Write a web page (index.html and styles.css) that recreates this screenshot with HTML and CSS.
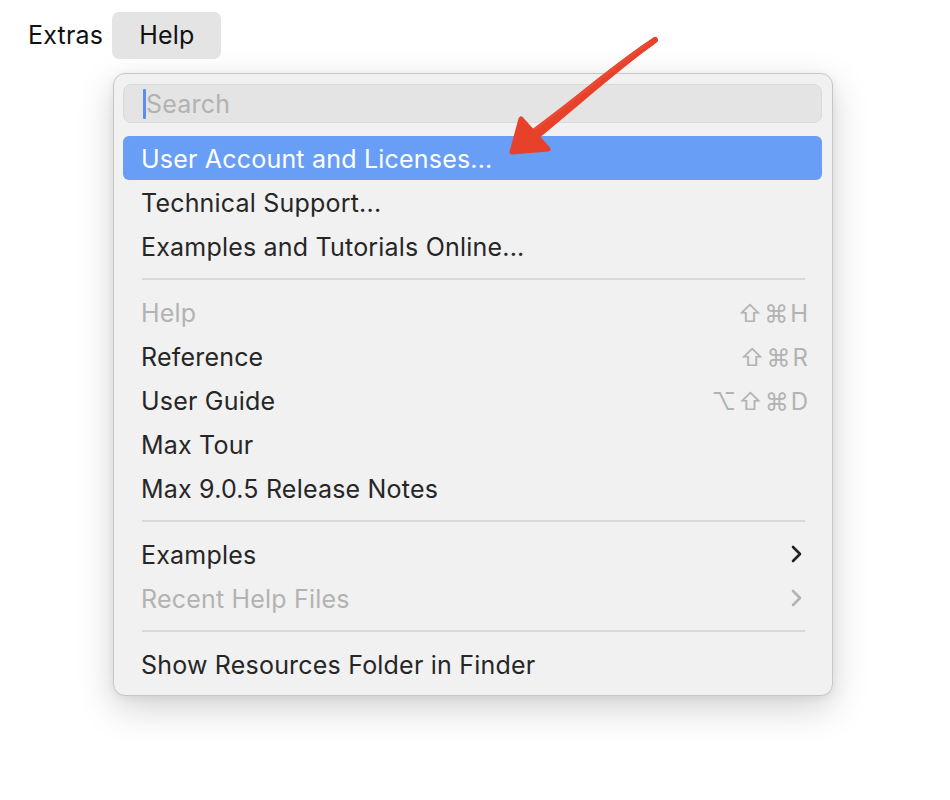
FILE: index.html
```html
<!DOCTYPE html>
<html>
<head>
<meta charset="utf-8">
<link rel="stylesheet" href="styles.css">
</head>
<body>
<div class="menubar">
  <span class="mb-item">Extras</span>
  <span class="mb-item mb-active">Help</span>
</div>
<div class="menu">
  <div class="search"><span class="caret"></span><span class="placeholder">Search</span></div>
  <div class="list">
    <div class="item selected">User Account and Licenses...</div>
    <div class="item">Technical Support...</div>
    <div class="item">Examples and Tutorials Online...</div>
    <div class="sep"></div>
    <div class="item disabled"><span>Help</span><span class="sc">⇧⌘H</span></div>
    <div class="item"><span>Reference</span><span class="sc">⇧⌘R</span></div>
    <div class="item"><span>User Guide</span><span class="sc">⌥⇧⌘D</span></div>
    <div class="item">Max Tour</div>
    <div class="item">Max 9.0.5 Release Notes</div>
    <div class="sep"></div>
    <div class="item"><span>Examples</span><svg class="chev" width="14" height="18" viewBox="0 0 14 18"><polyline points="3,2 10,9 3,16" fill="none" stroke="#222" stroke-width="2.6" stroke-linecap="round" stroke-linejoin="round"/></svg></div>
    <div class="item disabled"><span>Recent Help Files</span><svg class="chev" width="14" height="18" viewBox="0 0 14 18"><polyline points="3,2 10,9 3,16" fill="none" stroke="#b3b3b3" stroke-width="2.6" stroke-linecap="round" stroke-linejoin="round"/></svg></div>
    <div class="sep"></div>
    <div class="item">Show Resources Folder in Finder</div>
  </div>
</div>
<svg class="annot" width="950" height="800" viewBox="0 0 950 800">
  <path d="M655 40 C 622 62, 582 94, 532 136" fill="none" stroke="#e8412b" stroke-width="6" stroke-linecap="round"/>
  <path d="M652 43 C 618 67, 584 98, 534 139" fill="none" stroke="#e8412b" stroke-width="5" stroke-linecap="round"/>
  <path d="M650 42 C 616 64, 580 96, 528 134" fill="none" stroke="#ea4a33" stroke-width="3" stroke-linecap="round"/>
  <polygon points="521,119 512,152 548,149" fill="#e8412b" stroke="#e8412b" stroke-width="5" stroke-linejoin="round"/>
</svg>
</body>
</html>
```
FILE: styles.css
```css
html, body { margin: 0; padding: 0; background: #ffffff; }
body {
  font-family: Inter, "Noto Sans", "Liberation Sans", sans-serif;
  color: #262626;
  width: 950px;
  height: 800px;
  position: relative;
  overflow: hidden;
}
.menubar {
  display: flex;
  align-items: center;
  padding: 12px 0 0 28px;
  height: 47px;
}
.mb-item {
  font-size: 25px;
  color: #111;
  line-height: 47px;
  letter-spacing: 0.2px;
}
.mb-active {
  margin-left: 9px;
  width: 109px;
  box-sizing: border-box;
  padding-left: 27px;
  background: #e4e4e4;
  border-radius: 7px;
}
.menu {
  margin: 14px 0 0 113px;
  width: 720px;
  height: 623px;
  box-sizing: border-box;
  background: #f1f1f1;
  border: 1px solid #c6c6c6;
  border-radius: 12px;
  box-shadow: 0 12px 36px rgba(0,0,0,0.18), 0 2px 8px rgba(0,0,0,0.06);
  padding: 10px 10px 9px 9px;
}
.search {
  height: 39px;
  box-sizing: border-box;
  border: 1px solid #dadada;
  background: #e4e4e4;
  border-radius: 8px;
  display: flex;
  align-items: center;
  padding-left: 19px;
}
.caret {
  width: 3px;
  height: 30px;
  background: #5b8ef0;
  border-radius: 1px;
}
.placeholder {
  font-size: 25px;
  color: #b2b2b2;
  letter-spacing: 0.2px;
}
.list { margin-top: 13px; }
.item {
  height: 44px;
  box-sizing: border-box;
  display: flex;
  align-items: center;
  justify-content: space-between;
  padding: 2px 15px 0 18px;
  font-size: 25px;
  letter-spacing: 0.2px;
  border-radius: 6px;
  color: #262626;
}
.item.selected { background: #699ef7; color: #ffffff; }
.item.disabled { color: #b3b3b3; }
.sc {
  color: #b3b3b3;
  font-size: 24px;
  letter-spacing: 2px;
  margin-right: -3px;
  font-family: Inter, "DejaVu Sans", sans-serif;
}
.chev { margin-right: 3px; margin-top: -2px; }
.sep {
  height: 2px;
  background: #d9d9d9;
  margin: 10px 17px 10px 19px;
}
.annot {
  position: absolute;
  left: 0;
  top: 0;
  pointer-events: none;
}
```
